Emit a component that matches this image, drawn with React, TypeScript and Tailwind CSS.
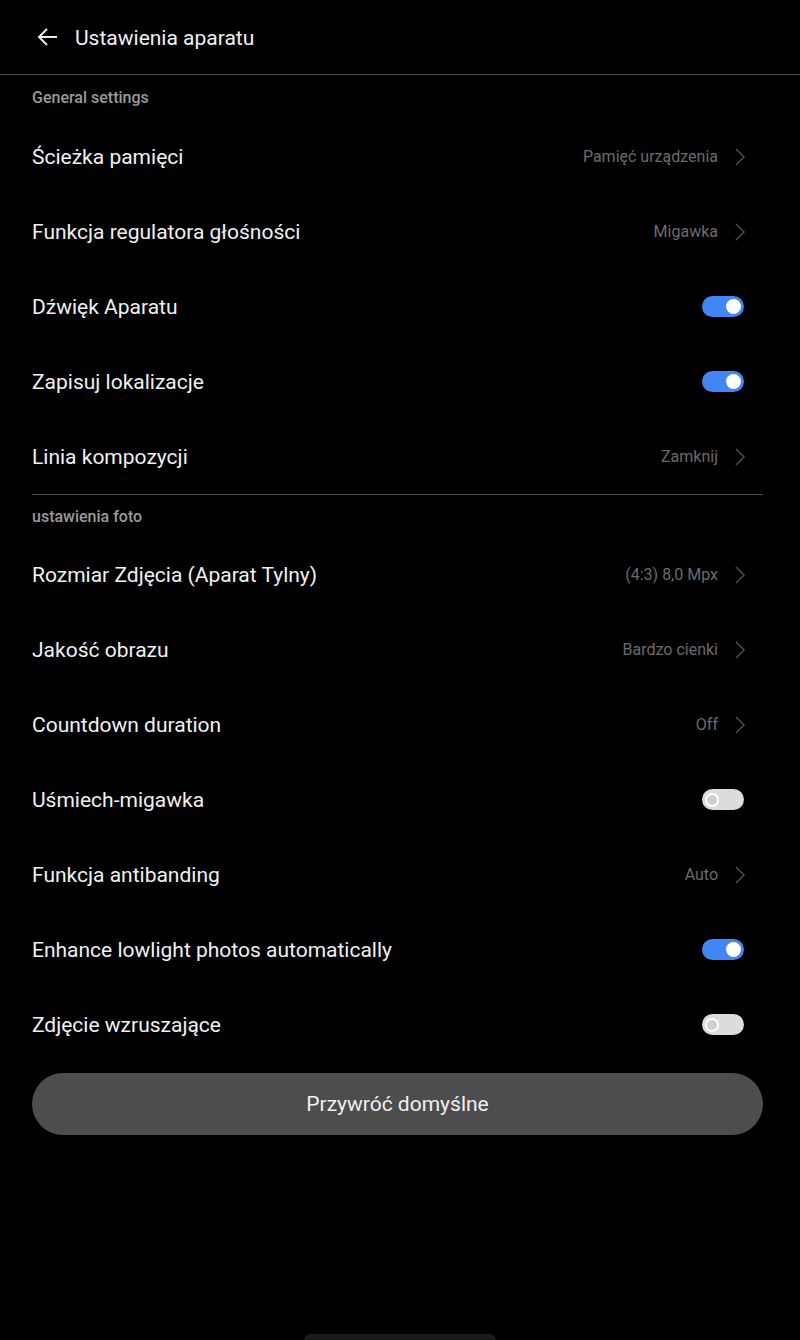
import { useState } from "react";

type Row =
  | { label: string; value: string }
  | { label: string; toggle: boolean };

const general: Row[] = [
  { label: "Ścieżka pamięci", value: "Pamięć urządzenia" },
  { label: "Funkcja regulatora głośności", value: "Migawka" },
  { label: "Dźwięk Aparatu", toggle: true },
  { label: "Zapisuj lokalizacje", toggle: true },
  { label: "Linia kompozycji", value: "Zamknij" },
];

const photo: Row[] = [
  { label: "Rozmiar Zdjęcia (Aparat Tylny)", value: "(4:3) 8,0 Mpx" },
  { label: "Jakość obrazu", value: "Bardzo cienki" },
  { label: "Countdown duration", value: "Off" },
  { label: "Uśmiech-migawka", toggle: false },
  { label: "Funkcja antibanding", value: "Auto" },
  { label: "Enhance lowlight photos automatically", toggle: true },
  { label: "Zdjęcie wzruszające", toggle: false },
];

function Chevron() {
  return (
    <svg width="12" height="20" viewBox="0 0 12 20" className="ml-[16px]">
      <path d="M2 2 L10 10 L2 18" fill="none" stroke="#4a4a4a" strokeWidth="1.6" />
    </svg>
  );
}

function Toggle({ initial }: { initial: boolean }) {
  const [on, setOn] = useState(initial);
  return (
    <button
      onClick={() => setOn(!on)}
      className={`w-[42px] h-[21px] rounded-full flex items-center px-[3px] mr-[2px] ${
        on ? "bg-[#4285f4] justify-end" : "bg-[#dcdcdc] justify-start"
      }`}
    >
      {on ? (
        <span className="w-[15px] h-[15px] rounded-full bg-white" />
      ) : (
        <span className="w-[14px] h-[14px] rounded-full border-2 border-white bg-[#cfcfcf]" />
      )}
    </button>
  );
}

function SettingRow({ row }: { row: Row }) {
  return (
    <div className="h-[75px] flex items-center justify-between pr-[17px]">
      <span className="text-[21px] text-[#f0f0f0] pt-[2px]">{row.label}</span>
      {"value" in row ? (
        <div className="flex items-center">
          <span className="text-[16px] text-[#6b6b6b] pt-[1px]">{row.value}</span>
          <Chevron />
        </div>
      ) : (
        <Toggle initial={row.toggle} />
      )}
    </div>
  );
}

export default function App() {
  return (
    <div
      className="w-[800px] h-[1340px] bg-black flex flex-col relative overflow-hidden"
      style={{ fontFamily: "Roboto, 'Noto Sans', sans-serif" }}
    >
      {/* Header */}
      <header className="h-[75px] flex items-center border-b border-[#4a4a4a] shrink-0">
        <svg width="24" height="24" viewBox="0 0 24 24" className="ml-[36px] mr-[15px]">
          <path d="M21 12 H4 M11 4 L3 12 L11 20" fill="none" stroke="#e8e8e8" strokeWidth="2" />
        </svg>
        <h1 className="text-[21px] text-[#f0f0f0] pt-[3px]">Ustawienia aparatu</h1>
      </header>

      <main className="pl-[32px] pr-[37px]">
        <div className="h-[44px] flex items-center text-[16px] text-[#9a9a9a] font-medium pt-[2px]">
          General settings
        </div>
        {general.map((r) => (
          <SettingRow key={r.label} row={r} />
        ))}
        <div className="border-t border-[#4a4a4a] w-[731px]" />
        <div className="h-[42px] flex items-center text-[16px] text-[#9a9a9a] font-medium pt-[2px]">
          ustawienia foto
        </div>
        {photo.map((r) => (
          <SettingRow key={r.label} row={r} />
        ))}
        <button className="mt-[11px] w-[731px] h-[62px] rounded-full bg-[#4d4d4d] text-[21px] text-[#f0f0f0] pt-[2px]">
          Przywróć domyślne
        </button>
      </main>

      <div className="absolute bottom-0 left-[304px] w-[192px] h-[6px] rounded-t-full bg-[#1a1a1f]" />
    </div>
  );
}
